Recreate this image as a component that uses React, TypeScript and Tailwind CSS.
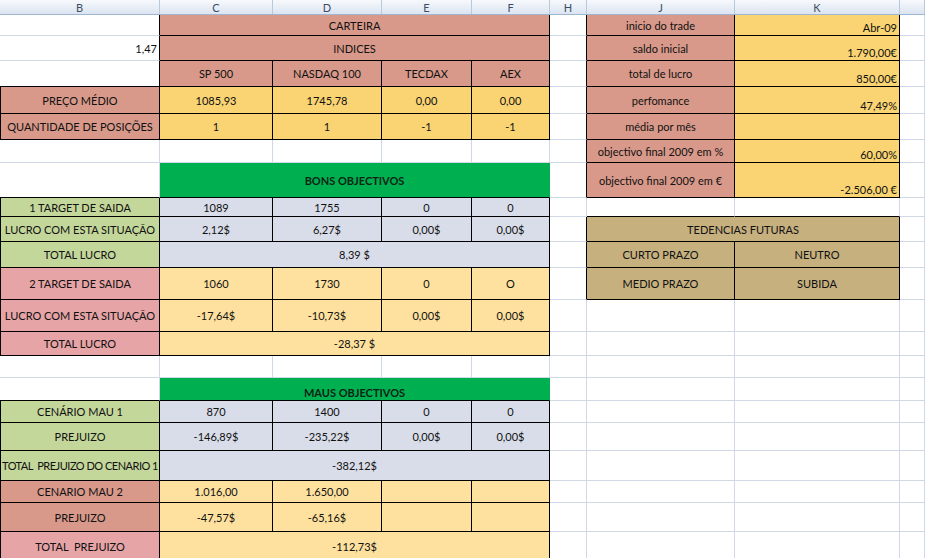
import React from "react";

type C = {
  t?: string;
  s?: number;
  bg?: string;
  b?: boolean;
  al?: "l" | "c" | "r";
  v?: "c" | "b";
  bold?: boolean;
  tight?: boolean;
};

const SAL = "bg-[#d8998a]";
const YEL = "bg-[#fad473]";
const LY = "bg-[#fee19f]";
const BG = "bg-[#d9dde9]";
const LG = "bg-[#c4d79b]";
const GR = "bg-[#00b050]";
const PK = "bg-[#e7a4a6]";
const TAN = "bg-[#c6b07e]";

const E: C = {};
const sal = (t: string): C => ({ t, bg: SAL, b: true });
const yel = (t: string): C => ({ t, bg: YEL, b: true });
const kv = (t: string): C => ({ t, bg: YEL, b: true, al: "r", v: "b" });
const lg = (t: string): C => ({ t, bg: LG, b: true });
const bg = (t: string): C => ({ t, bg: BG, b: true });
const pk = (t: string): C => ({ t, bg: PK, b: true });
const ly = (t: string): C => ({ t, bg: LY, b: true });
const tan = (t: string): C => ({ t, bg: TAN, b: true });

const ROWS: C[][] = [
  [E, { t: "CARTEIRA", s: 4, bg: SAL, b: true }, E, sal("inicio do trade"), kv("Abr-09"), E],
  [{ t: "1,47", al: "r" }, { t: "INDICES", s: 4, bg: SAL, b: true }, E, sal("saldo inicial"), kv("1.790,00€"), E],
  [E, sal("SP 500"), sal("NASDAQ 100"), sal("TECDAX"), sal("AEX"), E, sal("total de lucro"), kv("850,00€"), E],
  [sal("PREÇO MÉDIO"), yel("1085,93"), yel("1745,78"), yel("0,00"), yel("0,00"), E, sal("perfomance"), kv("47,49%"), E],
  [sal("QUANTIDADE DE POSIÇÕES"), yel("1"), yel("1"), yel("-1"), yel("-1"), E, sal("média por mês"), kv(""), E],
  [E, E, E, E, E, E, sal("objectivo final 2009 em %"), kv("60,00%"), E],
  [E, { t: "BONS OBJECTIVOS", s: 4, bg: GR, bold: true }, E, sal("objectivo final 2009 em €"), kv("-2.506,00 €"), E],
  [lg("1 TARGET DE SAIDA"), bg("1089"), bg("1755"), bg("0"), bg("0"), E, E, E, E],
  [lg("LUCRO COM ESTA SITUAÇÃO"), bg("2,12$"), bg("6,27$"), bg("0,00$"), bg("0,00$"), E, { t: "TEDENCIAS FUTURAS", s: 2, bg: TAN, b: true }, E],
  [lg("TOTAL LUCRO"), { t: "8,39 $", s: 4, bg: BG, b: true }, E, tan("CURTO PRAZO"), tan("NEUTRO"), E],
  [pk("2 TARGET DE SAIDA"), ly("1060"), ly("1730"), ly("0"), ly("O"), E, tan("MEDIO PRAZO"), tan("SUBIDA"), E],
  [pk("LUCRO COM ESTA SITUAÇÃO"), ly("-17,64$"), ly("-10,73$"), ly("0,00$"), ly("0,00$"), E, E, E, E],
  [pk("TOTAL LUCRO"), { t: "-28,37 $", s: 4, bg: LY, b: true }, E, E, E, E],
  [E, E, E, E, E, E, E, E, E],
  [E, { t: "MAUS OBJECTIVOS", s: 4, bg: GR, bold: true, v: "b" }, E, E, E, E],
  [lg("CENÁRIO MAU 1"), bg("870"), bg("1400"), bg("0"), bg("0"), E, E, E, E],
  [lg("PREJUIZO"), bg("-146,89$"), bg("-235,22$"), bg("0,00$"), bg("0,00$"), E, E, E, E],
  [{ ...lg("TOTAL  PREJUIZO DO CENARIO 1"), tight: true }, { t: "-382,12$", s: 4, bg: BG, b: true }, E, E, E, E],
  [sal("CENARIO MAU 2"), ly("1.016,00"), ly("1.650,00"), ly(""), ly(""), E, E, E, E],
  [sal("PREJUIZO"), ly("-47,57$"), ly("-65,16$"), ly(""), ly(""), E, E, E, E],
  [pk("TOTAL  PREJUIZO"), { t: "-112,73$", s: 4, bg: LY, b: true }, E, E, E, E],
];

const NC = 9;
const HEAD = ["B", "C", "D", "E", "F", "H", "J", "K", ""];

type Placed = { cell: C; r: number; c: number; s: number };

function layout(): { placed: Placed[]; grid: (Placed | null)[][] } {
  const placed: Placed[] = [];
  const grid: (Placed | null)[][] = ROWS.map(() => Array(NC).fill(null));
  ROWS.forEach((row, r) => {
    let c = 0;
    row.forEach((cell) => {
      const s = cell.s ?? 1;
      const p: Placed = { cell, r, c, s };
      for (let k = 0; k < s; k++) if (c + k < NC) grid[r][c + k] = p;
      placed.push(p);
      c += s;
    });
  });
  return { placed, grid };
}

export default function App() {
  const { placed, grid } = layout();

  return (
    <div className="w-[925px] h-[558px] overflow-hidden bg-white font-[family-name:Lato,sans-serif] text-[#111]">
      <div className="grid grid-cols-[160px_113px_109px_90px_78px_37px_148px_165px_25px] h-[15px] border-b border-b-[#9eb6ce] bg-gradient-to-b from-[#f7f9fc] to-[#dbe4f1]">
        {HEAD.map((h, i) => (
          <div
            key={i}
            className="flex items-center justify-center border-r border-r-[#b8c9dc] text-[11px] leading-none text-[#3b4d66]"
          >
            {h}
          </div>
        ))}
      </div>
      <div className="grid grid-cols-[160px_113px_109px_90px_78px_37px_148px_165px_25px] grid-rows-[21px_25px_26px_27px_26px_23px_35px_19px_25px_26px_32px_32px_24px_22px_23px_22px_28px_30px_22px_29px_30px]">
        {placed.map((p, i) => {
          const { cell, r, c, s } = p;
          let rightBlack = !!cell.b;
          const rn = c + s < NC ? grid[r][c + s] : null;
          if (rn && rn.cell.b) rightBlack = true;
          let botBlack = !!cell.b;
          if (r + 1 < ROWS.length) {
            for (let k = 0; k < s; k++) {
              const bn = grid[r + 1][c + k];
              if (bn && bn.cell.b) botBlack = true;
            }
          }
          const filled = !!cell.bg;
          const rc = rightBlack ? "border-r-black" : filled ? "border-r-transparent" : "border-r-[#d0d7e5]";
          const bc = botBlack ? "border-b-black" : filled ? "border-b-transparent" : "border-b-[#d0d7e5]";
          const left = c === 0 && cell.b ? "border-l border-l-black" : "";
          const span = s === 4 ? "col-span-4" : s === 2 ? "col-span-2" : "";
          const al = cell.al === "r" ? "justify-end pr-[2px]" : cell.al === "l" ? "justify-start" : "justify-center";
          const v = cell.v === "b" ? "items-end pb-[2px]" : "items-center";
          const w = cell.bold ? "font-bold text-[#0c2414]" : "";
          const tr = cell.tight ? "tracking-[-0.5px]" : "";
          return (
            <div
              key={i}
              className={`flex overflow-hidden whitespace-pre border-r border-b text-[11px] leading-none ${rc} ${bc} ${left} ${span} ${al} ${v} ${w} ${tr} ${cell.bg ?? "bg-white"}`}
            >
              <span className="shrink-0">{cell.t ?? ""}</span>
            </div>
          );
        })}
      </div>
    </div>
  );
}
